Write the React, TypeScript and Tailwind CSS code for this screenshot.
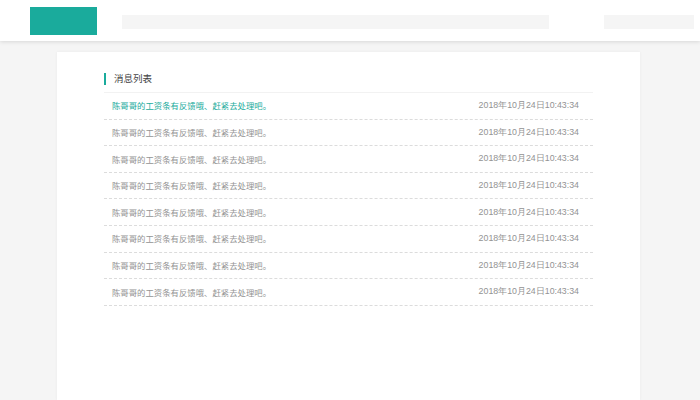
const messages = Array.from({ length: 8 }, (_, i) => ({
  id: i,
  text: '陈哥哥的工资条有反馈哦、赶紧去处理吧。',
  time: '2018年10月24日10:43:34',
  unread: i === 0,
}));

export default function App() {
  return (
    <div className="flex h-[400px] w-[700px] flex-col overflow-hidden bg-[#f5f5f5] font-['Noto_Sans_CJK_SC',sans-serif]">
      {/* Header */}
      <header className="relative z-10 flex h-[41px] shrink-0 items-start bg-white shadow-[0_1px_4px_rgba(0,0,0,0.12)]">
        <div className="ml-[30px] mt-[7px] h-[28px] w-[67px] bg-[#1aab9c]" />
        <div className="ml-[25px] mt-[15px] h-[14px] w-[427px] bg-[#f5f5f5]" />
        <div className="ml-[55px] mt-[15px] h-[14px] w-[90px] bg-[#f5f5f5]" />
      </header>

      {/* Card */}
      <main className="relative ml-[57px] mt-[11px] w-[583px] flex-1 bg-white px-[47px] pt-[40px] shadow-[0_0_3px_rgba(0,0,0,0.05)]">
        <div className="absolute left-[47px] right-[47px] top-[20px]">
          <div className="flex h-[14px] items-center">
            <span className="h-[12px] w-[2px] bg-[#1aab9c]" />
            <span className="ml-[8px] text-[9.5px] leading-none text-[#444]">消息列表</span>
          </div>
        </div>
        <ul className="border-t border-[#f2f2f2]">
          {messages.map((m) => (
            <li
              key={m.id}
              className="flex h-[26.6px] items-center justify-between border-b border-dashed border-[#dcdcdc] pl-[8px] pr-[14px] text-[8.4px]"
            >
              <span className={m.unread ? 'text-[#1aab9c]' : 'text-[#939393]'}>{m.text}</span>
              <span className="font-['Liberation_Sans',sans-serif] text-[8.8px] text-[#939393]">{m.time}</span>
            </li>
          ))}
        </ul>
      </main>
    </div>
  );
}
